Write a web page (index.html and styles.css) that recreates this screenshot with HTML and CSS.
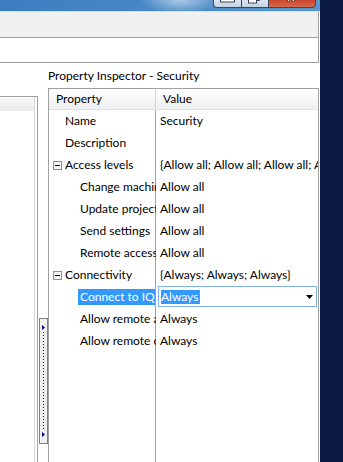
FILE: index.html
```html
<!DOCTYPE html>
<html>
<head>
<meta charset="utf-8">
<link rel="stylesheet" href="styles.css">
</head>
<body>
<div class="screen">
  <div class="window">
    <div class="titlebar">
      <div class="caption-buttons">
        <div class="cbtn min"><svg width="27" height="7" viewBox="0 0 27 7"><rect x="6.5" y="-2" width="14" height="4" fill="#fff" stroke="#3b4350"/></svg></div>
        <div class="cbtn max"><svg width="26" height="7" viewBox="0 0 26 7"><rect x="6.5" y="-2" width="8" height="5" fill="#fff" stroke="#3b4350"/><path d="M14.5 0.5 H17.5 V-2" fill="none" stroke="#3b4350"/></svg></div>
        <div class="cbtn close"><svg width="46" height="7" viewBox="0 0 46 7"><path d="M18 -2 L20 1 M26 -2 L24 1" stroke="#4a2a24" stroke-width="2.6" fill="none"/><path d="M18 -2 L20 1 M26 -2 L24 1" stroke="#f4e6e2" stroke-width="1.2" fill="none"/></svg></div>
      </div>
    </div>
    <div class="frame-line"></div>
    <div class="toolbar"></div>
    <div class="strip"></div>
    <div class="main">
      <div class="left-panel"><div class="lp-header"></div></div>
      <div class="splitter">
        <div class="handle">
          <svg class="harrow" width="3" height="5" viewBox="0 0 3 5"><path d="M0 0 L3 2.5 L0 5 Z" fill="#000080"/></svg>
          <div class="dots"></div>
          <svg class="harrow" width="3" height="5" viewBox="0 0 3 5"><path d="M0 0 L3 2.5 L0 5 Z" fill="#000080"/></svg>
        </div>
      </div>
      <div class="inspector">
        <div class="insp-title">Property Inspector - Security</div>
        <div class="grid">
          <div class="grid-head">
            <div class="hc hname">Property</div>
            <div class="hc hval">Value</div>
          </div>
          <div class="grid-body">
            <div class="row"><div class="nc l0">Name</div><div class="vc">Security</div></div>
            <div class="row"><div class="nc l0">Description</div><div class="vc"></div></div>
            <div class="row"><div class="nc exp"><svg class="expander" width="9" height="9" viewBox="0 0 9 9"><rect x="0.5" y="0.5" width="8" height="8" fill="#f4f4f4" stroke="#8e8f8f"/><path d="M2 4.5 H7" stroke="#000" stroke-width="1"/></svg><span>Access levels</span></div><div class="vc">{Allow all; Allow all; Allow all; Allow all}</div></div>
            <div class="row"><div class="nc l1">Change machine settings</div><div class="vc">Allow all</div></div>
            <div class="row"><div class="nc l1">Update project</div><div class="vc">Allow all</div></div>
            <div class="row"><div class="nc l1">Send settings</div><div class="vc">Allow all</div></div>
            <div class="row"><div class="nc l1">Remote access</div><div class="vc">Allow all</div></div>
            <div class="row"><div class="nc exp"><svg class="expander" width="9" height="9" viewBox="0 0 9 9"><rect x="0.5" y="0.5" width="8" height="8" fill="#f4f4f4" stroke="#8e8f8f"/><path d="M2 4.5 H7" stroke="#000" stroke-width="1"/></svg><span>Connectivity</span></div><div class="vc">{Always; Always; Always}</div></div>
            <div class="row"><div class="nc sel"><span class="hl">Connect to IQ server</span></div><div class="vc edit"><div class="combo"><span class="seltext">Always</span><svg class="drop" width="7" height="4" viewBox="0 0 7 4"><path d="M0 0 H7 L3.5 4 Z" fill="#000"/></svg></div></div></div>
            <div class="row"><div class="nc l1">Allow remote access</div><div class="vc">Always</div></div>
            <div class="row"><div class="nc l1">Allow remote control</div><div class="vc">Always</div></div>
          </div>
        </div>
      </div>
    </div>
  </div>
  <div class="desktop"></div>
</div>
</body>
</html>
```
FILE: styles.css
```css
* { box-sizing: border-box; }
html, body { margin: 0; padding: 0; }
body {
  width: 343px;
  height: 462px;
  overflow: hidden;
  font-family: "Lato", "Noto Sans", sans-serif;
  font-size: 12px;
  color: #000;
  background: #0b1b44;
}
.screen { display: flex; height: 462px; }
.window {
  width: 320px;
  display: flex;
  flex-direction: column;
  background: #fff;
}
.desktop { flex: 1; background: #0b1b44; }

.titlebar {
  height: 11px;
  display: flex;
  justify-content: flex-end;
  padding-right: 4px;
  background:
    radial-gradient(ellipse 40px 14px at 180px 0px, rgba(255,255,255,0.55), rgba(255,255,255,0) 100%),
    linear-gradient(to right, #3b7dbf, #4a8bc8 60%, #5b98cf);
}
.caption-buttons { display: flex; height: 8px; }
.cbtn {
  height: 8px;
  border: 1px solid #3e4756;
  border-top: none;
  overflow: hidden;
}
.cbtn svg { display: block; }
.cbtn.min {
  width: 28px;
  border-right: none;
  border-bottom-left-radius: 4px;
  background: linear-gradient(#dbe5f0, #c4d2e2);
}
.cbtn.max {
  width: 27px;
  border-right: none;
  background: linear-gradient(#dbe5f0, #c4d2e2);
}
.cbtn.close {
  width: 48px;
  border-bottom-right-radius: 4px;
  background: linear-gradient(#c9462c, #d86a4e);
}
.frame-line { height: 1px; background: #d4e1ee; }

.toolbar {
  width: 319px;
  height: 26px;
  background: #f0f0f0;
  border-bottom: 1px solid #a0a0a0;
  border-right: 1px solid #a0a0a0;
}
.strip {
  width: 319px;
  height: 25px;
  background: #fff;
  border-bottom: 1px solid #a0a0a0;
  border-right: 1px solid #a0a0a0;
}
.main { flex: 1; display: flex; min-height: 0; }

.left-panel {
  width: 38px;
  margin-top: 33px;
  border-top: 1px solid #a0a0a0;
  border-right: 1px solid #a0a0a0;
  box-shadow: inset -2px 0 0 #fff, inset -3px 0 0 #d8d8d8;
}
.lp-header {
  margin-top: 1px;
  height: 13px;
  margin-right: 3px;
  background: linear-gradient(#f8f8f8, #ebebeb);
}

.splitter { width: 10px; padding-top: 255px; padding-left: 1px; }
.handle {
  width: 9px;
  height: 126px;
  border: 1px solid #808080;
  background: #f0f0f0;
  display: flex;
  flex-direction: column;
  align-items: flex-start;
  padding: 6px 0 6px 2px;
  gap: 2px;
}
.harrow { display: block; }
.dots {
  flex: 1;
  width: 1px;
  margin-left: 1px;
  background: repeating-linear-gradient(to bottom, #000080 0 1px, transparent 1px 3px);
}

.inspector {
  width: 272px;
  display: flex;
  flex-direction: column;
  padding-right: 1px;
}
.insp-title {
  height: 25px;
  padding-top: 5px;
  line-height: 16px;
  white-space: nowrap;
}
.grid {
  flex: 1;
  display: flex;
  flex-direction: column;
  border: 1px solid #a0a0a0;
  border-bottom: none;
  min-height: 0;
}
.grid-head {
  height: 21px;
  display: flex;
  border-bottom: 1px solid #e2e3e4;
  background: linear-gradient(#fefefe, #eff0f2);
}
.hc { line-height: 20px; padding-left: 7px; white-space: nowrap; }
.hname { width: 107px; border-right: 1px solid #d5d5d5; }
.hval { flex: 1; }

.grid-body {
  flex: 1;
  background: linear-gradient(to right, transparent 106px, #a0a0a0 106px, #a0a0a0 107px, transparent 107px);
}
.row { display: flex; height: 22px; line-height: 22px; }
.nc {
  width: 107px;
  padding-right: 1px;
  overflow: hidden;
  white-space: nowrap;
}
.nc.l0 { padding-left: 16px; }
.nc.l1 { padding-left: 31px; }
.nc.exp {
  display: flex;
  align-items: center;
  gap: 3px;
  padding-left: 4px;
}
.expander { display: block; flex: none; }
.nc.sel { padding-left: 29px; }
.hl {
  display: block;
  margin-top: 3px;
  line-height: 16px;
  padding-left: 2px;
  background: #3399ff;
  color: #fff;
  overflow: hidden;
}
.vc {
  flex: 1;
  min-width: 0;
  overflow: hidden;
  white-space: nowrap;
  padding-left: 4px;
}
.vc.edit { padding: 0 1px 1px 2px; }
.combo {
  height: 21px;
  border: 1px solid #7fb2e5;
  display: flex;
  align-items: center;
  padding-left: 2px;
  padding-right: 3px;
  background: #fff;
}
.seltext {
  line-height: 14px;
  background: #3399ff;
  color: #fff;
  padding-right: 1px;
  border-right: 1px solid #e07a20;
}
.drop { margin-left: auto; display: block; }
```
